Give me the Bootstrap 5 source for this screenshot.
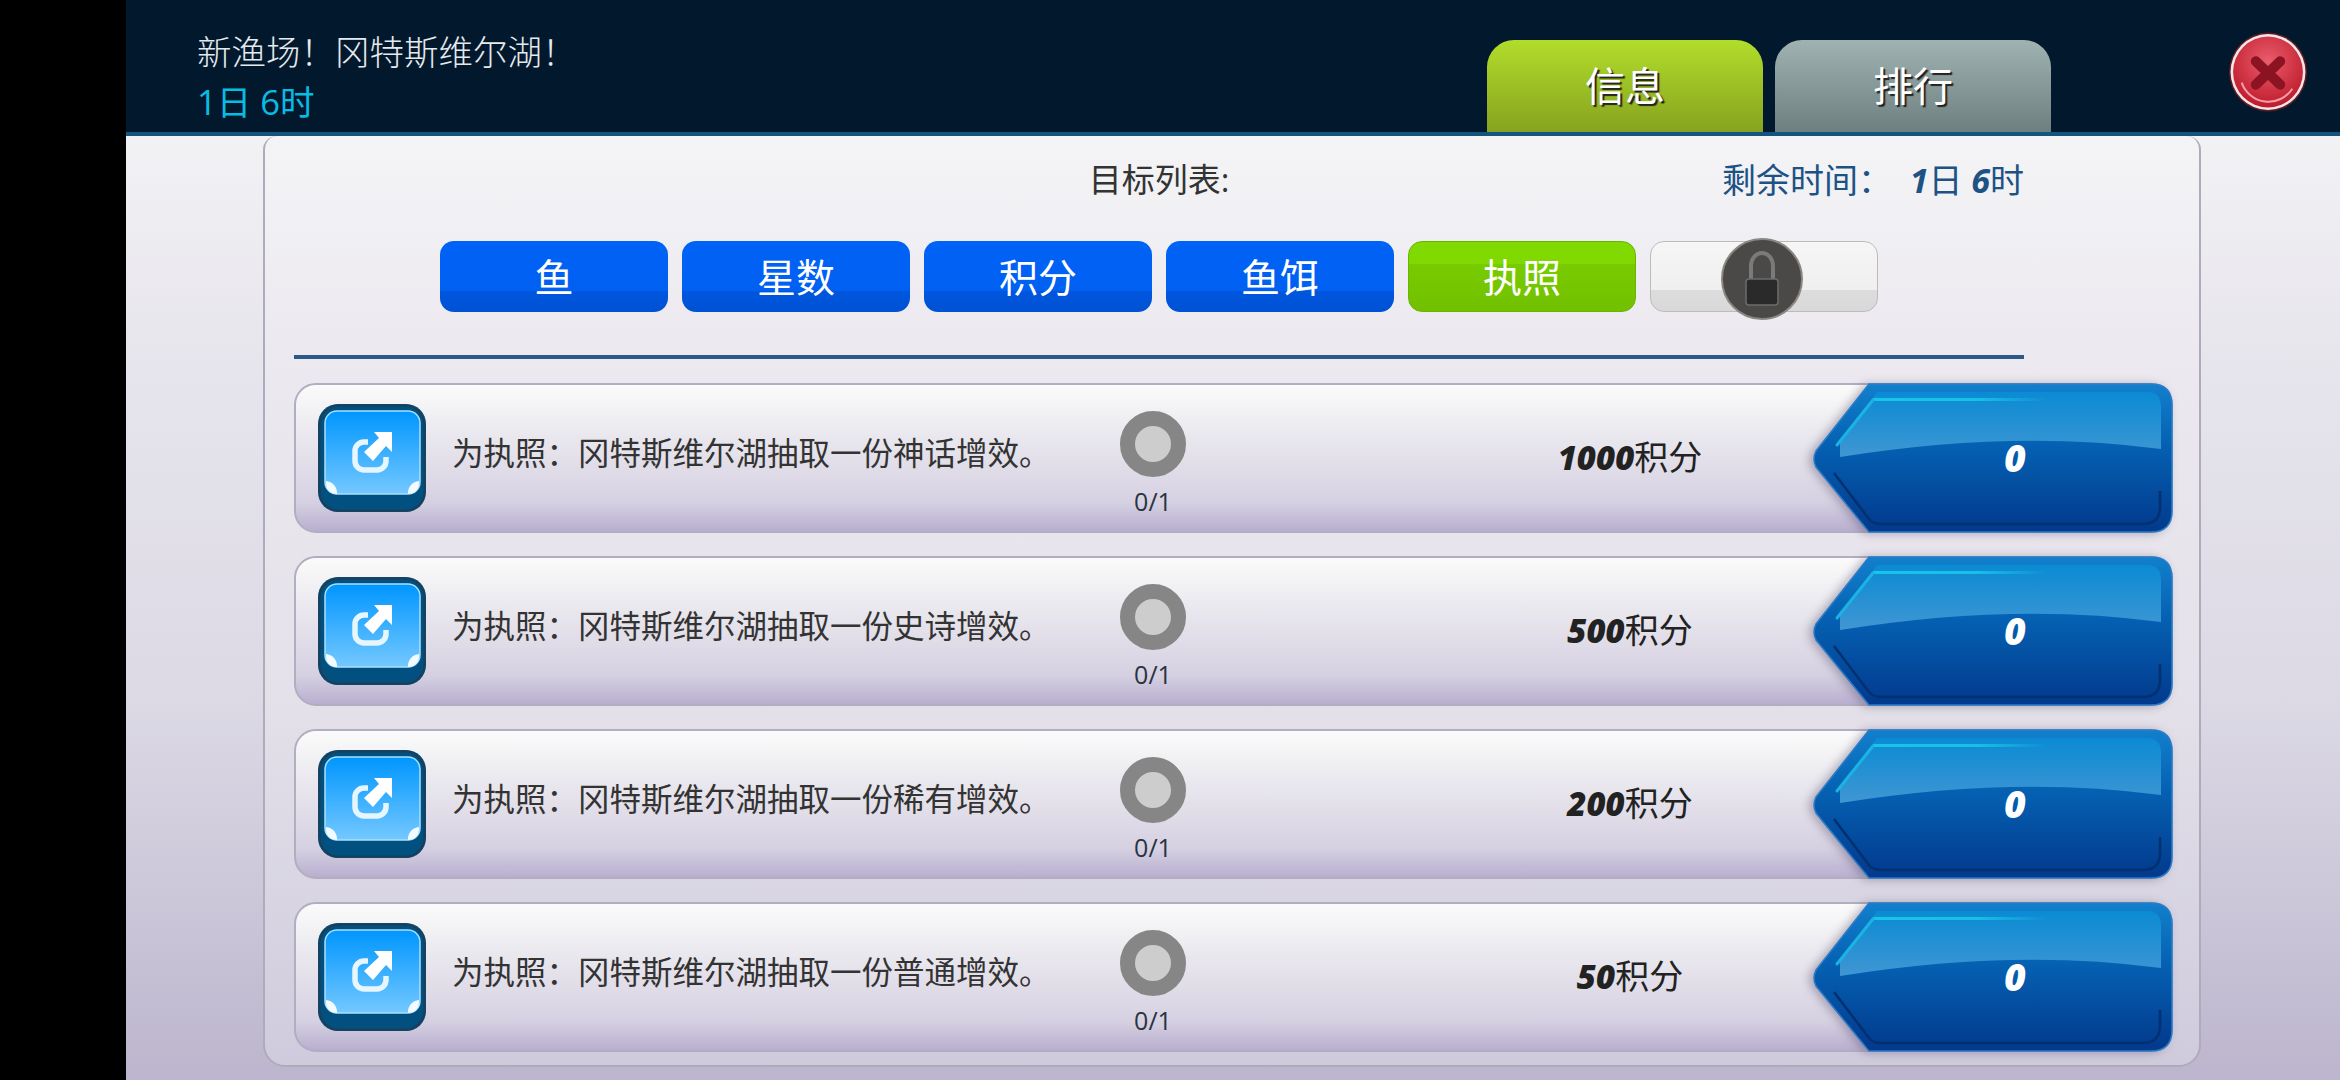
<!DOCTYPE html>
<html lang="zh-CN">
<head>
    <meta charset="UTF-8">
    <meta name="viewport" content="width=device-width, initial-scale=1.0">
    <title>新渔场</title>
    <link href="https://cdn.jsdelivr.net/npm/bootstrap@5.3.0/dist/css/bootstrap.min.css" rel="stylesheet">
    <style>
        html, body { height: 100%; }
        body {
            background: #000;
            overflow: hidden;
            font-family: "Open Sans", "Noto Sans CJK SC", sans-serif;
        }
        .black-bar { width: 126px; flex: none; background: #000; }
        .game { width: 2214px; height: 1080px; }

        /* top bar */
        .top-bar {
            height: 136px;
            padding-left: 71px;
            padding-right: 32px;
            background: #02192d;
            border-bottom: 4px solid #14557f;
        }
        .event-title { padding-top: 27px; font-size: 34.5px; line-height: 50px; color: #e6eaed; font-weight: 300; }
        .event-time { color: #08bde4; font-size: 34.5px; font-weight: 400; }
        .tab-list { column-gap: 12px; }
        .tab-btn {
            width: 276px;
            height: 92px;
            padding: 0;
            border: 0;
            border-radius: 27px 27px 0 0;
            font-size: 40px;
            line-height: 88px;
            color: #fff;
            text-shadow: 2px 2px 1px #222;
        }
        .tab-btn.tab-on { background: linear-gradient(#b2dd2b, #86a31f); }
        .tab-btn.tab-off { background: linear-gradient(#a1b2b2, #6e7f80); }
        .tab-btn:hover { color: #fff; }
        .close-btn { width: 80px; height: 80px; margin-top: 32px; margin-left: 177px; }

        /* body */
        .game-body {
            height: 944px;
            padding-left: 137px;
            background: linear-gradient(#f2f1f4, #e5e3eb 28%, #dcd9e5 60%, #bcb5cd);
        }
        .list-panel {
            width: 1938px;
            height: 931px;
            padding-left: 29px;
            background: linear-gradient(#f4f4f6, #ebe8ef 25%, #e4e1ea 60%, #cfcbdd);
            border: 2px solid #aeabba;
            border-top: 0;
            border-radius: 14px 14px 22px 22px;
        }
        .list-inner { width: 1730px; }
        .list-head {
            display: grid;
            grid-template-columns: 1fr auto 1fr;
            align-items: center;
            height: 88px;
            font-size: 33px;
            color: #333;
        }
        .time-left { color: #1d5284; font-size: 34px; }
        .num-em { font-weight: 700; font-style: italic; }
        .cat-row { margin-top: 17px; column-gap: 14px; }
        .cat-btn {
            width: 228px;
            height: 71px;
            padding: 0;
            border: 0;
            border-radius: 14px;
            font-size: 39px;
            line-height: 68px;
            color: #fff;
        }
        .cat-btn.cat-blue { background: linear-gradient(#0062f6 0, #0060f2 70%, #0056de 70%, #0052d4 100%); }
        .cat-btn.cat-green { background: linear-gradient(#80da00 0, #80d800 32%, #78cb00 32%, #72c000 100%); border: 1px solid #6bb400; }
        .cat-btn.cat-locked { background: linear-gradient(#f6f6f6 0, #efefef 70%, #dcdcdc 70%, #d9d9d9 100%); border: 1px solid #bbb; }
        .lock-mark { position: absolute; left: 70px; top: -4px; width: 82px; height: 82px; }
        .head-rule { height: 4px; margin-top: 43px; background: #2a5a88; }

        /* task rows */
        .task-list { width: 1879px; margin-top: 24px; gap: 23px; }
        .task-row {
            height: 150px;
            padding-left: 22px;
            background: linear-gradient(#fbfbfb 0, #eeedf1 25%, #e3e0ea 50%, #d6d1e2 80%, #b8afcf 100%);
            border: 2px solid #b1aec0;
            border-radius: 22px;
        }
        .task-icon { width: 108px; height: 108px; flex: none; }
        .task-text { width: 677px; padding-left: 26px; padding-bottom: 10px; font-size: 31.5px; color: #333; white-space: nowrap; flex: none; }
        .task-goal { width: 100px; padding-top: 26px; flex: none; align-self: flex-start; font-size: 25px; line-height: 30px; color: #2a3340; }
        .goal-ring { width: 66px; height: 66px; margin-bottom: 9px; border: 15px solid #868686; border-radius: 50%; background: #cdcdcd; }
        .task-pts { width: 610px; padding-left: 244px; padding-bottom: 2px; flex: none; font-size: 34px; color: #222; text-align: center; white-space: nowrap; }
        .task-pts .num-em { font-size: 33px; font-weight: 800; }
        .task-reward {
            position: relative;
            width: 360px;
            height: 150px;
            margin-top: -2px;
            margin-bottom: -2px;
            flex: none;
            font-size: 37px;
            font-weight: 800;
            font-style: italic;
            color: #fff;
        }
        .reward-shape { position: absolute; left: 0; top: 0; width: 360px; height: 150px; filter: drop-shadow(-4px 1px 5px rgba(60, 50, 80, .35)); }
        .reward-num { position: relative; padding-left: 44px; }
    </style>
</head>
<body class="d-flex">
    <svg width="0" height="0" class="position-absolute">
        <defs>
            <linearGradient id="faceGrad" x1="0" y1="0" x2="0" y2="1">
                <stop offset="0" stop-color="#0096ff"/>
                <stop offset="1" stop-color="#74c8ff"/>
            </linearGradient>
            <linearGradient id="glossGrad" x1="0" y1="0" x2="0" y2="1">
                <stop offset="0" stop-color="#0a8bd4"/>
                <stop offset="1" stop-color="#4096d2"/>
            </linearGradient>
            <linearGradient id="lowGrad" x1="0" y1="0" x2="0" y2="1">
                <stop offset="0" stop-color="#1280cc"/>
                <stop offset=".42" stop-color="#0560b2"/>
                <stop offset="1" stop-color="#02398c"/>
            </linearGradient>
            <linearGradient id="shineGrad" x1="0" y1="0" x2="1" y2="0">
                <stop offset="0" stop-color="#19c4ea"/>
                <stop offset=".6" stop-color="#19bfe6"/>
                <stop offset="1" stop-color="#19bfe6" stop-opacity="0"/>
            </linearGradient>
            <radialGradient id="redGrad" cx=".5" cy=".35" r=".7">
                <stop offset="0" stop-color="#ea5c6c"/>
                <stop offset="1" stop-color="#bb1626"/>
            </radialGradient>
            <symbol id="shareBtn" viewBox="0 0 108 108">
                <rect width="108" height="108" rx="20" fill="#02507f"/>
                <rect x="1.5" y="1.5" width="105" height="105" rx="19" fill="none" stroke="#1c3e58" stroke-width="2"/>
                <rect x="7" y="7" width="95" height="83" rx="12" fill="url(#faceGrad)" stroke="#a9e0ff" stroke-width="1.5"/>
                <path d="M8 77 a12 12 0 0 1 11 13 h-1 a10 10 0 0 1 -10 -10z" fill="#f2fbff"/>
                <path d="M101 77 a12 12 0 0 0 -11 13 h1 a10 10 0 0 0 10 -10z" fill="#f2fbff"/>
                <path d="M50 38 H46 a9 9 0 0 0 -9 9 V57 a9 9 0 0 0 9 9 H59 a9 9 0 0 0 9 -9 V53" fill="none" stroke="#e6f6ff" stroke-width="5.5"/>
                <polygon points="56,28 74,28 74,48 68,42 55,57 46,48 61,34" fill="#fff"/>
            </symbol>
            <symbol id="rewardShape" viewBox="0 0 360 150">
                <path d="M56 1 H338 Q359 1 359 22 V128 Q359 149 338 149 H56 L3 84 Q-1 76 3 68 Z" fill="url(#lowGrad)" stroke="#2a7cc8" stroke-width="1.5"/>
                <path d="M64 9 H334 Q348 9 348 24 V66 Q200 46 27 74 L27 58 Z" fill="url(#glossGrad)"/>
                <rect x="60" y="15" width="175" height="3" fill="url(#shineGrad)"/>
                <path d="M60 17 L24 62" stroke="#19b4e4" stroke-width="3" stroke-linecap="round" fill="none"/>
                <path d="M21 90 L56 136 Q60 141 68 141 H330 Q347 141 347 124 V108" stroke="#03306f" stroke-width="2.5" fill="none"/>
            </symbol>
        </defs>
    </svg>

    <div class="black-bar"></div>
    <div class="game d-flex flex-column">
        <div class="top-bar d-flex align-items-end">
            <div class="event-title align-self-start">
                <div>新渔场！冈特斯维尔湖！</div>
                <div class="event-time">1日 6时</div>
            </div>
            <div class="tab-list d-flex ms-auto">
                <button class="btn tab-btn tab-on">信息</button>
                <button class="btn tab-btn tab-off">排行</button>
            </div>
            <svg class="close-btn align-self-start" viewBox="0 0 78 79">
                <ellipse cx="39" cy="39.5" rx="38.5" ry="39" fill="#5d1c24"/>
                <ellipse cx="39" cy="39.5" rx="37" ry="37.5" fill="#f4e6e8"/>
                <ellipse cx="39" cy="39.5" rx="34.5" ry="35" fill="url(#redGrad)"/>
                <path d="M13 50 a28 28 0 0 0 50 6" fill="none" stroke="#f3a0aa" stroke-width="2"/>
                <path d="M27 29 L51 52 M51 29 L27 52" stroke="#8b1322" stroke-width="10" stroke-linecap="round"/>
            </svg>
        </div>
        <div class="game-body">
            <div class="list-panel">
                <div class="list-inner">
                    <div class="list-head">
                        <span></span>
                        <span>目标列表:</span>
                        <span class="time-left text-end">剩余时间： &nbsp;<span class="num-em">1</span>日 <span class="num-em">6</span>时</span>
                    </div>
                    <div class="cat-row d-flex justify-content-center">
                        <button class="btn cat-btn cat-blue">鱼</button>
                        <button class="btn cat-btn cat-blue">星数</button>
                        <button class="btn cat-btn cat-blue">积分</button>
                        <button class="btn cat-btn cat-blue">鱼饵</button>
                        <button class="btn cat-btn cat-green">执照</button>
                        <button class="btn cat-btn cat-locked position-relative" aria-label="locked">
                            <svg class="lock-mark" viewBox="0 0 82 82">
                                <circle cx="41" cy="41" r="40" fill="#4a4948" stroke="#8a8782" stroke-width="2"/>
                                <path d="M30 42 V28 a11 13 0 0 1 22 0 V42" fill="none" stroke="#7a7a7a" stroke-width="4"/>
                                <rect x="25" y="41" width="32" height="26" rx="3" fill="#2a2a2a" stroke="#6c6c6c" stroke-width="1.5"/>
                            </svg>
                        </button>
                    </div>
                    <div class="head-rule"></div>
                </div>
                <div class="task-list d-flex flex-column">
                    <div class="task-row d-flex align-items-center">
                        <svg class="task-icon"><use href="#shareBtn"/></svg>
                        <div class="task-text">为执照：冈特斯维尔湖抽取一份神话增效。</div>
                        <div class="task-goal d-flex flex-column align-items-center"><div class="goal-ring"></div>0/1</div>
                        <div class="task-pts"><span class="num-em">1000</span>积分</div>
                        <div class="task-reward d-flex align-items-center justify-content-center"><svg class="reward-shape"><use href="#rewardShape"/></svg><span class="reward-num">0</span></div>
                    </div>
                    <div class="task-row d-flex align-items-center">
                        <svg class="task-icon"><use href="#shareBtn"/></svg>
                        <div class="task-text">为执照：冈特斯维尔湖抽取一份史诗增效。</div>
                        <div class="task-goal d-flex flex-column align-items-center"><div class="goal-ring"></div>0/1</div>
                        <div class="task-pts"><span class="num-em">500</span>积分</div>
                        <div class="task-reward d-flex align-items-center justify-content-center"><svg class="reward-shape"><use href="#rewardShape"/></svg><span class="reward-num">0</span></div>
                    </div>
                    <div class="task-row d-flex align-items-center">
                        <svg class="task-icon"><use href="#shareBtn"/></svg>
                        <div class="task-text">为执照：冈特斯维尔湖抽取一份稀有增效。</div>
                        <div class="task-goal d-flex flex-column align-items-center"><div class="goal-ring"></div>0/1</div>
                        <div class="task-pts"><span class="num-em">200</span>积分</div>
                        <div class="task-reward d-flex align-items-center justify-content-center"><svg class="reward-shape"><use href="#rewardShape"/></svg><span class="reward-num">0</span></div>
                    </div>
                    <div class="task-row d-flex align-items-center">
                        <svg class="task-icon"><use href="#shareBtn"/></svg>
                        <div class="task-text">为执照：冈特斯维尔湖抽取一份普通增效。</div>
                        <div class="task-goal d-flex flex-column align-items-center"><div class="goal-ring"></div>0/1</div>
                        <div class="task-pts"><span class="num-em">50</span>积分</div>
                        <div class="task-reward d-flex align-items-center justify-content-center"><svg class="reward-shape"><use href="#rewardShape"/></svg><span class="reward-num">0</span></div>
                    </div>
                </div>
            </div>
        </div>
    </div>
    <script src="https://cdn.jsdelivr.net/npm/bootstrap@5.3.0/dist/js/bootstrap.bundle.min.js"></script>
</body>
</html>
